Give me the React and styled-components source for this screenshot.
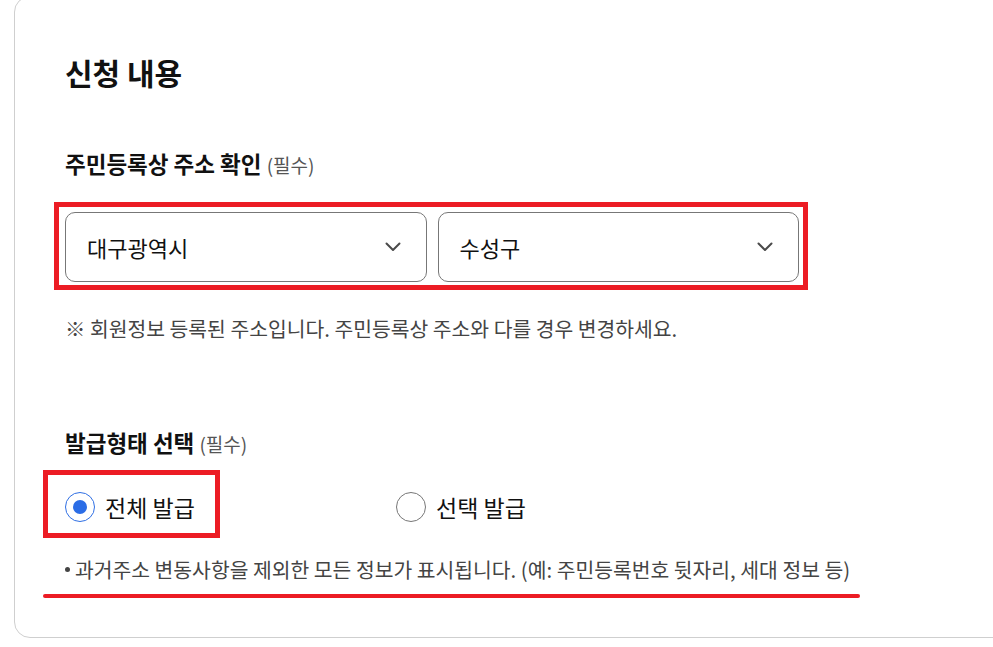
import React, { useState } from 'react';
import styled, { createGlobalStyle } from 'styled-components';

const GlobalStyle = createGlobalStyle`
  html, body {
    margin: 0;
    padding: 0;
    background: #ffffff;
    overflow: hidden;
  }
  body {
    font-family: "Noto Sans CJK KR", "Noto Sans", sans-serif;
    color: #111111;
  }
  * {
    box-sizing: border-box;
  }
`;

const Page = styled.div`
  padding-left: 14px;
  width: 993px;
  height: 647px;
  overflow: hidden;
`;

const Card = styled.section`
  margin-top: -4px;
  width: 1040px;
  border: 1px solid #cfcfcf;
  border-radius: 16px;
  padding: 55px 50px 54px 50px;
  background: #ffffff;
`;

const Title = styled.h2`
  margin: 0;
  font-size: 30px;
  font-weight: 700;
  line-height: 40px;
  color: #111111;
`;

const Label = styled.h3`
  margin: ${(p) => p.$top}px 0 0 0;
  font-size: 22.5px;
  font-weight: 700;
  line-height: 30px;
  color: #111111;
`;

const Required = styled.span`
  font-size: 19px;
  font-weight: 400;
  line-height: 1;
  color: #555555;
`;

const Highlight = styled.div`
  position: relative;
  justify-self: start;

  &::after {
    content: '';
    position: absolute;
    left: ${(p) => p.$l}px;
    top: ${(p) => p.$t}px;
    right: ${(p) => p.$r}px;
    bottom: ${(p) => p.$b}px;
    border: 5px solid #ec1c24;
    pointer-events: none;
  }
`;

const SelectRow = styled.div`
  margin-top: 34px;
  width: 734px;
  display: grid;
  grid-template-columns: 1fr 1fr;
  gap: 11px;
`;

const SelectBox = styled.button`
  height: 70px;
  display: flex;
  align-items: center;
  justify-content: space-between;
  padding: 0 25px 0 21px;
  border: 1px solid #777777;
  border-radius: 10px;
  background: #ffffff;
  font-family: inherit;
  font-size: 22px;
  color: #111111;
  cursor: pointer;
  text-align: left;
`;

const Note = styled.p`
  margin: 32px 0 0 0;
  font-size: 20.4px;
  line-height: 28px;
  color: #444444;
`;

const RadioGroup = styled.div`
  margin-top: 35px;
  display: grid;
  grid-template-columns: 331px 331px;
  height: 30px;
`;

const RadioItem = styled.label`
  display: flex;
  align-items: center;
  gap: 10px;
  height: 30px;
  font-size: 23px;
  color: #111111;
  cursor: pointer;
  width: max-content;
`;

const RadioCircle = styled.span`
  width: 30px;
  height: 30px;
  border-radius: 50%;
  border: 1px solid ${(p) => (p.$checked ? '#2f6fe4' : '#777777')};
  display: flex;
  align-items: center;
  justify-content: center;

  &::after {
    content: '';
    width: 14px;
    height: 14px;
    border-radius: 50%;
    background: ${(p) => (p.$checked ? '#2b6de6' : 'transparent')};
  }
`;

const Hint = styled.p`
  position: relative;
  margin: 33px 0 0 0;
  font-size: 20.4px;
  line-height: 28px;
  color: #444444;
  width: max-content;

  &::before {
    content: '';
    display: inline-block;
    width: 5px;
    height: 5px;
    border-radius: 50%;
    background: #444444;
    margin-right: 5px;
    vertical-align: middle;
    position: relative;
    top: -3px;
  }

  &::after {
    content: '';
    position: absolute;
    left: -22px;
    right: -10px;
    bottom: -15px;
    height: 4px;
    border-radius: 2px;
    background: #ec1c24;
  }
`;

function Chevron() {
  return (
    <svg width="16" height="10" viewBox="0 0 16 10" fill="none">
      <path d="M1.5 1.5L8 8L14.5 1.5" stroke="#4a4a4a" strokeWidth="2" strokeLinecap="round" strokeLinejoin="round" />
    </svg>
  );
}

export default function App() {
  const [type, setType] = useState('all');

  return (
    <>
      <GlobalStyle />
      <Page>
        <Card>
          <Title>신청 내용</Title>

          <Label $top={56}>
            주민등록상 주소 확인 <Required>(필수)</Required>
          </Label>
          <Highlight $l={-11} $t={-10} $r={-9} $b={-8} as={SelectRow}>
            <SelectBox>
              <span>대구광역시</span>
              <Chevron />
            </SelectBox>
            <SelectBox>
              <span>수성구</span>
              <Chevron />
            </SelectBox>
          </Highlight>
          <Note>※ 회원정보 등록된 주소입니다. 주민등록상 주소와 다를 경우 변경하세요.</Note>

          <Label $top={85}>
            발급형태 선택 <Required>(필수)</Required>
          </Label>
          <RadioGroup>
            <Highlight $l={-22} $t={-22} $r={-25} $b={-16}>
              <RadioItem onClick={() => setType('all')}>
                <RadioCircle $checked={type === 'all'} />
                전체 발급
              </RadioItem>
            </Highlight>
            <RadioItem onClick={() => setType('select')}>
              <RadioCircle $checked={type === 'select'} />
              선택 발급
            </RadioItem>
          </RadioGroup>
          <Hint>과거주소 변동사항을 제외한 모든 정보가 표시됩니다. (예: 주민등록번호 뒷자리, 세대 정보 등)</Hint>
        </Card>
      </Page>
    </>
  );
}
